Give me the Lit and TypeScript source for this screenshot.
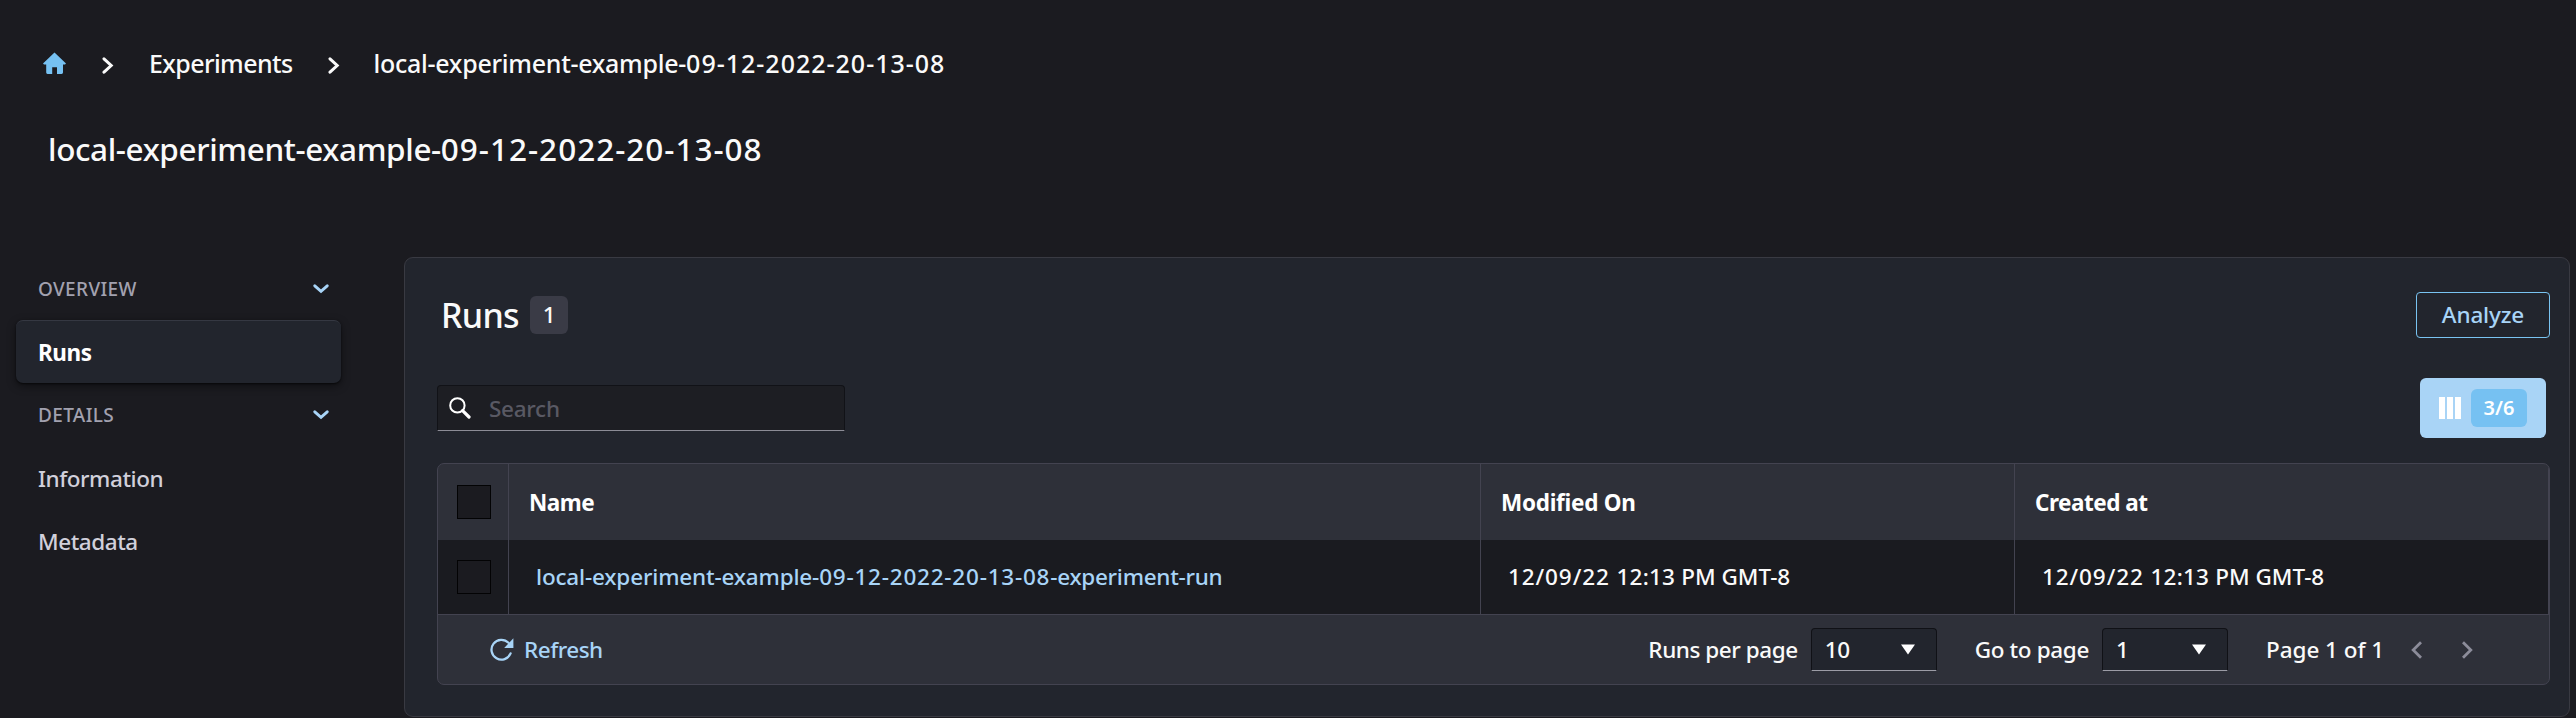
import { LitElement, html, css, svg } from "lit";
import { customElement } from "lit/decorators.js";

const chevronDown = html`<svg width="16" height="10" viewBox="0 0 16 10">
  <path d="M1.8 1.8 8 7.4l6.2-5.6" fill="none" stroke="#a8d4f7" stroke-width="2.9" stroke-linecap="round" stroke-linejoin="miter" />
</svg>`;

const crumbArrow = html`<svg class="arrow" width="12" height="17" viewBox="0 0 12 17">
  <path d="M2 1.8 9.2 8.5 2 15.2" fill="none" stroke="#fafafa" stroke-width="3" stroke-linecap="round" />
</svg>`;

const caret = html`<svg width="14" height="11" viewBox="0 0 14 11">
  <path d="M0 0.5h14L7 10.5z" fill="#fff" />
</svg>`;

const pagerArrow = (d: string) => html`<svg class="pager" width="11" height="18" viewBox="0 0 11 18">
  ${svg`<path d=${d} fill="none" stroke="#8c8c9a" stroke-width="2.8" />`}
</svg>`;

@customElement("app-root")
export class AppRoot extends LitElement {
  static styles = css`
    :host {
      display: block;
      height: 718px;
      overflow: hidden;
      background: #1b1b20;
      color: #fafafa;
      font-family: "Noto Sans", "Open Sans", sans-serif;
      font-size: 22.5px;
      font-weight: 500;
      line-height: 30px;
      letter-spacing: -0.28px;
      white-space: nowrap;
    }
    * { box-sizing: border-box; }
    svg { display: block; flex: none; }
    .crumbs { display: flex; align-items: center; height: 127px; padding-left: 43px; font-size: 25px; }
    .crumbs > span { padding-bottom: 2px; }
    .crumbs .arrow { margin: 3px 35px 0 36px; }
    .crumbs .exp { letter-spacing: -0.6px; }
    .crumbs .exp + .arrow { margin: 3px 34px 0 35px; }
    .crumbs .w { letter-spacing: -0.27px; }
    .crumbs .n { letter-spacing: 1px; }
    h1 { display: flex; align-items: center; height: 44px; margin: 0 0 86px; padding-left: 48px; font-size: 31.5px; font-weight: 500; }
    h1 .w { letter-spacing: -0.38px; }
    h1 .n { letter-spacing: 1px; }
    .body { display: flex; align-items: flex-start; }
    nav { width: 325px; margin: 0 63px 0 16px; }
    .item, .group { display: flex; align-items: center; height: 63px; padding: 0 12px 0 22px; border-radius: 7px; }
    .group { justify-content: space-between; padding-top: 1px; color: #a2a1af; font-size: 19px; letter-spacing: 0.35px; }
    .item { padding-top: 3px; color: #d1d0db; letter-spacing: -0.45px; }
    .item.active { padding-top: 2px; background: #22252d; color: #fff; font-weight: 700; border-top: 1px solid #353842; box-shadow: 0 3px 10px rgba(0, 0, 0, 0.45), 0 1px 2px rgba(0, 0, 0, 0.6); }
    main { width: 2166px; height: 460px; padding: 0 19px 0 32px; background: #22252d; border: 1px solid #393a42; border-radius: 9px; }
    .head { display: flex; align-items: center; height: 114px; padding-left: 4px; }
    h2 { width: 77px; margin: 0; font-size: 34px; font-weight: 500; line-height: 44px; letter-spacing: -0.7px; }
    .count { display: flex; align-items: center; justify-content: center; width: 38px; height: 38px; margin-left: 12px; padding-bottom: 1px; border-radius: 6px; background: #3a3b46; }
    .analyze { display: flex; align-items: center; justify-content: center; width: 134px; height: 46px; margin-left: auto; border: 1px solid #79c4f2; border-radius: 4px; color: #a8d4f7; letter-spacing: -0.15px; }
    .tools { display: flex; justify-content: space-between; align-items: center; height: 72px; padding-right: 4px; }
    .search { display: flex; align-items: center; width: 408px; height: 46px; padding-left: 11px; background: #1d1e23; border: 1px solid #111217; border-bottom-color: #8c8c96; border-radius: 4px 4px 0 0; color: #595963; }
    .search span { margin-left: 18px; padding-top: 2px; }
    .columns { display: flex; align-items: center; width: 126px; height: 60px; padding-left: 19px; background: #a9d4f6; border-radius: 6px; }
    .ratio { display: flex; align-items: center; justify-content: center; width: 56px; height: 38px; margin-left: 10px; border-radius: 6px; background: #76c1f2; color: #fff; font-size: 20px; font-weight: 600; letter-spacing: 0; }
    .table { width: 2113px; margin-top: 19px; height: 222px; border: 1px solid #434350; border-radius: 7px; overflow: hidden; background: #2e3039; }
    .row { display: grid; grid-template-columns: 71px 972px 534px 1fr; }
    .row > div { display: flex; align-items: center; padding: 2px 0 0 20px; border-right: 1px solid #434350; }
    .row.header { height: 76px; font-weight: 700; color: #fff; }
    .row.data { height: 74px; background: #1a1b20; }
    .row.data > div { padding: 0 0 0 27px; }
    .row > .pick, .row.data > .pick { padding: 0 0 0 19px; }
    .box { width: 34px; height: 34px; background: #1b1b20; border: 1px solid #030304; }
    .name { letter-spacing: -0.5px; }
    .data .link { color: #a8d4f7; }
    .link .w { letter-spacing: -0.17px; }
    .link .n { letter-spacing: 0.78px; }
    .date { letter-spacing: 0.9px; }
    .time { letter-spacing: 0.2px; }
    .zone { letter-spacing: 0; }
    .footer { display: flex; align-items: center; height: 70px; padding: 0 76px 0 52px; border-top: 1px solid #434350; }
    .footer > span { padding-top: 1px; }
    .refresh { margin: 0 auto 0 10px; color: #a8d4f7; letter-spacing: -0.5px; }
    .label { letter-spacing: -0.45px; }
    .select { display: flex; align-items: center; justify-content: space-between; width: 126px; height: 43px; margin-left: 13px; padding: 0 21px 0 13px; background: #22252d; border: 1px solid #101116; border-bottom-color: #9c9ca6; border-radius: 4px 4px 0 0; }
    .select span { padding-top: 1px; }
    .go { margin-left: 38px; letter-spacing: -0.35px; }
    .pages { margin: 0 27px 0 38px; letter-spacing: -0.05px; }
    .pager + .pager { margin-left: 40px; }
  `;

  render() {
    return html`
      <div class="crumbs">
        <svg width="23" height="23" viewBox="0 0 23 23">
          <path d="M11.5 0.4 23 11.4 22 12.4H20V20.6Q20 22 18.6 22H14V15.2H9.2V22H4.5Q3.2 22 3.2 20.6V12.4H1L0 11.4z" fill="#76c1f2" />
        </svg>
        ${crumbArrow}
        <span class="exp">Experiments</span>
        ${crumbArrow}
        <span><span class="w">local-experiment-example-</span><span class="n">09-12-2022-20-13-08</span></span>
      </div>
      <h1><span class="w">local-experiment-example-</span><span class="n">09-12-2022-20-13-08</span></h1>
      <div class="body">
        <nav>
          <div class="group"><span>OVERVIEW</span>${chevronDown}</div>
          <div class="item active">Runs</div>
          <div class="group"><span>DETAILS</span>${chevronDown}</div>
          <div class="item">Information</div>
          <div class="item">Metadata</div>
        </nav>
        <main>
          <div class="head">
            <h2>Runs</h2>
            <div class="count">1</div>
            <div class="analyze">Analyze</div>
          </div>
          <div class="tools">
            <div class="search">
              <svg width="22" height="22" viewBox="0 0 22 22">
                <circle cx="8.4" cy="8.4" r="7.2" fill="none" stroke="#fff" stroke-width="2" />
                <path d="M13.6 13.6 20 20" stroke="#fff" stroke-width="3.2" stroke-linecap="round" />
              </svg>
              <span>Search</span>
            </div>
            <div class="columns">
              <svg width="22" height="22" viewBox="0 0 22 22">
                <path d="M0 0h6v22H0zM8 0h6v22H8zM16 0h6v22H16z" fill="#fff" />
              </svg>
              <div class="ratio">3/6</div>
            </div>
          </div>
          <div class="table">
            <div class="row header">
              <div class="pick"><span class="box"></span></div>
              <div class="name">Name</div>
              <div>Modified On</div>
              <div class="name">Created at</div>
            </div>
            <div class="row data">
              <div class="pick"><span class="box"></span></div>
              <div class="link"><span class="w">local-experiment-example-</span><span class="n">09-12-2022-20-13-08</span><span>-experiment-run</span></div>
              ${[0, 1].map(() => html`<div><span><span class="date">12/09/22 </span><span class="time">12:13 </span><span class="zone">PM GMT-8</span></span></div>`)}
            </div>
            <div class="footer">
              <svg width="24" height="24" viewBox="0 0 24 24">
                <path d="M20.6 15.4A9.9 9.9 0 1 1 18.5 4.8" fill="none" stroke="#a8d4f7" stroke-width="2.3" stroke-linecap="round" />
                <path d="M23.4 0.2V10H14.2z" fill="#a8d4f7" />
              </svg>
              <span class="refresh">Refresh</span>
              <span class="label">Runs per page</span>
              <div class="select"><span>10</span>${caret}</div>
              <span class="go">Go to page</span>
              <div class="select"><span>1</span>${caret}</div>
              <span class="pages">Page 1 of 1</span>
              ${pagerArrow("M10 1.2 2.2 9 10 16.8")}
              ${pagerArrow("M1 1.2 8.8 9 1 16.8")}
            </div>
          </div>
        </main>
      </div>
    `;
  }
}
